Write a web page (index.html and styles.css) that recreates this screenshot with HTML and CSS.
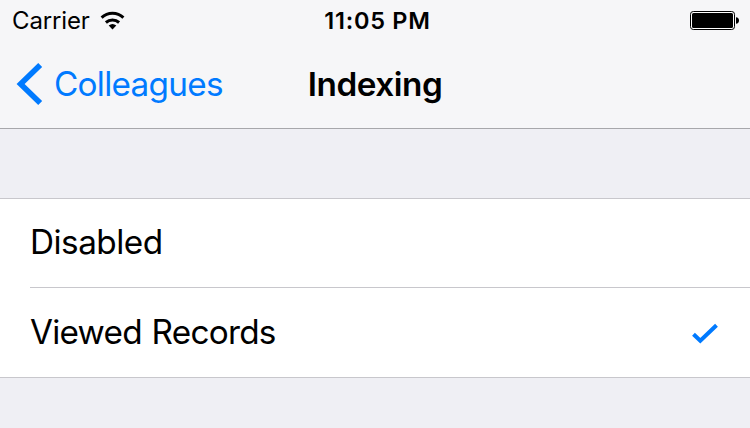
FILE: index.html
```html
<!DOCTYPE html>
<html lang="en">
<head>
<meta charset="utf-8">
<title>Indexing</title>
<link rel="stylesheet" href="styles.css">
</head>
<body>
<header class="header">
  <div class="status">
    <div class="carrier"><span class="carrier-name">Carrier</span>
      <svg class="wifi" width="26" height="20" viewBox="0 0 26 20" aria-hidden="true">
        <path d="M1.6 6.6A16 16 0 0 1 23.4 6.6M5.9 11.5A10 10 0 0 1 19.1 11.5" fill="none" stroke="#000" stroke-width="3"/>
        <path d="M8.7 14.5A6 6 0 0 1 16.3 14.5L12.5 18.5Z"/>
      </svg>
    </div>
    <span class="time">11:05 PM</span>
    <svg class="battery" width="50" height="20" viewBox="0 0 50 20" aria-hidden="true">
      <rect x=".5" y=".5" width="44" height="18" rx="2.8" fill="#fff" stroke="#000"/>
      <rect x="2" y="2" width="41" height="15" rx="1.5"/>
      <path d="M46 6.2Q49 6.6 49 9.5T46 12.8Z"/>
    </svg>
  </div>
  <nav class="nav">
    <a class="back">
      <svg class="chevron" width="28" height="44" viewBox="0 0 28 44" aria-hidden="true"><path d="M25.2 2.9 5.6 22 25.2 41.1" fill="none" stroke="#007aff" stroke-width="5.6"/></svg>
      <span class="back-label">Colleagues</span>
    </a>
    <h1 class="title">Indexing</h1>
  </nav>
</header>
<main class="group">
  <div class="row"><span class="disabled">Disabled</span></div>
  <div class="row"><span class="viewed">Viewed Records</span>
    <svg class="check" width="28" height="22" viewBox="0 0 28 22" aria-hidden="true"><path d="M2.5 11.2 9.3 17.8 25.5 2.2" fill="none" stroke="#007aff" stroke-width="4"/></svg>
  </div>
</main>
</body>
</html>
```
FILE: styles.css
```css
* { box-sizing: border-box; }
body { margin: 0; background: #efeff4; color: #000; font: 33.3px/40px Inter, "Liberation Sans", sans-serif; }
.header { height: 129px; background: #f6f6f8; border-bottom: 1px solid #a7a7ab; }
.status { height: 41px; display: grid; grid-template-columns: 1fr auto 1fr; align-items: center; padding: 1px 10px 0 12px; font-size: 24px; }
.carrier { display: flex; align-items: center; }
.carrier-name { letter-spacing: -.15px; }
.wifi { margin-left: 10.5px; }
.time { padding-left: 3px; font-weight: 600; font-size: 23.5px; letter-spacing: .75px; font-kerning: none; }
.battery { justify-self: end; }
.nav { height: 86px; display: grid; grid-template-columns: 1fr auto 1fr; align-items: center; padding: 0 15px; }
.back { display: flex; align-items: center; color: #007aff; }
.back-label { margin-left: 11px; letter-spacing: -.71px; }
.title { margin: 0; font-size: 33.3px; font-weight: 600; letter-spacing: -.45px; }
.group { margin-top: 69px; padding-left: 30px; background: #fff; border: solid #c8c7cc; border-width: 1px 0; }
.row { height: 88px; display: flex; align-items: center; justify-content: space-between; padding: 0 31px 2px 0; }
.row + .row { height: 90px; border-top: 1px solid #c8c7cc; }
.disabled { letter-spacing: -.5px; }
.viewed { letter-spacing: -.75px; word-spacing: 1.2px; }
.check { margin-top: 4px; }
```
